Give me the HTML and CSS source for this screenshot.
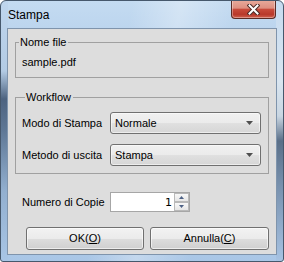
FILE: index.html
```html
<!DOCTYPE html>
<html lang="it">
<head>
<meta charset="utf-8">
<title>Stampa</title>
<link rel="stylesheet" href="styles.css">
</head>
<body>
<div class="window">
  <div class="titlebar">
    <span class="title">Stampa</span>
    <div class="close">
      <svg width="13" height="11" viewBox="0 0 13 11">
        <path d="M2.5 1.5 L10.5 9.5 M10.5 1.5 L2.5 9.5" stroke="#4a2a26" stroke-width="4" stroke-linecap="square" fill="none"/>
        <path d="M2.5 1.5 L10.5 9.5 M10.5 1.5 L2.5 9.5" stroke="#ffffff" stroke-width="2" stroke-linecap="square" fill="none"/>
      </svg>
    </div>
  </div>
  <div class="client">
    <fieldset class="group group-file">
      <legend>Nome file</legend>
      <div class="file-name">sample.pdf</div>
    </fieldset>
    <fieldset class="group group-workflow">
      <legend>Workflow</legend>
      <div class="row">
        <span class="label">Modo di Stampa</span>
        <div class="combo"><span>Normale</span><svg class="arrow" width="7" height="4" viewBox="0 0 7 4"><polygon points="0,0 7,0 3.5,4" fill="#4f4f4f"/></svg></div>
      </div>
      <div class="row">
        <span class="label">Metodo di uscita</span>
        <div class="combo"><span>Stampa</span><svg class="arrow" width="7" height="4" viewBox="0 0 7 4"><polygon points="0,0 7,0 3.5,4" fill="#4f4f4f"/></svg></div>
      </div>
    </fieldset>
    <div class="row copies">
      <span class="label">Numero di Copie</span>
      <div class="spin">
        <span class="value">1</span>
        <div class="spin-buttons">
          <div class="spin-btn"><svg width="5" height="3" viewBox="0 0 5 3"><polygon points="0,3 5,3 2.5,0" fill="#4d6185"/></svg></div>
          <div class="spin-btn"><svg width="5" height="3" viewBox="0 0 5 3"><polygon points="0,0 5,0 2.5,3" fill="#4d6185"/></svg></div>
        </div>
      </div>
    </div>
    <div class="buttons">
      <div class="btn btn-ok">OK(<u>O</u>)</div>
      <div class="btn btn-cancel">Annulla(<u>C</u>)</div>
    </div>
  </div>
</div>
</body>
</html>
```

FILE: styles.css
```css
html, body {
  margin: 0;
  padding: 0;
  background: #ffffff;
}

body {
  font-family: "Liberation Sans", Arial, sans-serif;
  font-size: 11px;
  color: #000000;
}

.window {
  width: 284px;
  height: 262px;
  box-sizing: border-box;
  border: 1px solid #46586c;
  border-radius: 6px 6px 3px 3px;
  padding: 0 6px 6px 6px;
  display: flex;
  flex-direction: column;
  overflow: hidden;
  background:
    linear-gradient(to bottom, #bfd6ee 0, #b3cbe4 70px, #4d6380 98px, #5f7896 130px, #92afcf 190px, #a9c6e6 262px) left top / 7px 100% no-repeat,
    linear-gradient(to bottom, #c6dbf0 0, #d9e5f0 80px, #c9d6e2 115px, #5a6f88 140px, #7891ae 185px, #a8c4e4 262px) right top / 7px 100% no-repeat,
    linear-gradient(100deg, rgba(255,255,255,0) 40%, rgba(255,255,255,0.3) 55%, rgba(255,255,255,0) 72%),
    linear-gradient(to bottom, #c4dbf1 0, #bcd5ee 28px, #b4cee9 200px, #a9c6e6 262px);
}

.titlebar {
  height: 27px;
  flex: none;
  display: flex;
  justify-content: space-between;
  align-items: flex-start;
}

.title {
  font-size: 12px;
  line-height: 15px;
  margin-top: 7px;
  margin-left: 1px;
  color: #000000;
}

.close {
  width: 45px;
  height: 19px;
  box-sizing: border-box;
  margin-top: -1px;
  margin-right: 1px;
  border: 1px solid #5a2b25;
  border-top: none;
  border-radius: 0 0 4px 4px;
  background: linear-gradient(to bottom, #e8ab9c 0%, #de8f80 45%, #c84b3b 52%, #b8392b 80%, #d0614f 100%);
  box-shadow: inset 0 0 0 1px rgba(255,255,255,0.35);
  display: flex;
  align-items: center;
  justify-content: center;
}

.client {
  flex: 1;
  background: #dddddd;
  border: 1px solid #7f94ac;
  padding: 0 7px;
  display: flex;
  flex-direction: column;
}

.group {
  margin: 0;
  padding: 0;
  min-width: 0;
  border: 1px solid #a0a0a0;
}

.group legend {
  font-size: 11px;
  line-height: 13px;
  margin-left: 3px;
  padding: 0 2px 0 1px;
}

.group-file {
  margin-top: 7px;
}

.file-name {
  line-height: 13px;
  padding: 7px 6px 8px 6px;
}

.group-workflow {
  margin-top: 13px;
  padding: 8px 7px 7px 6px;
  display: flex;
  flex-direction: column;
  gap: 10px;
}

.row {
  display: flex;
  align-items: center;
}

.label {
  width: 88px;
  flex: none;
  line-height: 13px;
}

.combo {
  flex: 1;
  height: 22px;
  box-sizing: border-box;
  border: 1px solid #707070;
  border-radius: 3px;
  background: linear-gradient(to bottom, #f0f0f0 0%, #ebebeb 50%, #e0e0e0 51%, #d6d6d6 100%);
  box-shadow: inset 0 0 0 1px rgba(255,255,255,0.55);
  display: flex;
  align-items: center;
  justify-content: space-between;
  padding: 0 7px 0 4px;
}

.copies {
  margin-top: 18px;
  padding-left: 7px;
}

.spin {
  width: 80px;
  height: 20px;
  box-sizing: border-box;
  border: 1px solid #a6a6a6;
  background: #ffffff;
  display: flex;
  align-items: center;
  justify-content: flex-end;
}

.value {
  font-family: "DejaVu Sans", sans-serif;
  font-size: 11px;
  margin-right: 2px;
}

.spin-buttons {
  width: 15px;
  height: 18px;
  display: flex;
  flex-direction: column;
}

.spin-btn {
  flex: 1;
  box-sizing: border-box;
  border: 1px solid #b9b9b9;
  background: linear-gradient(to bottom, #f8f8f8, #e6e6e6);
  display: flex;
  align-items: center;
  justify-content: center;
}

.buttons {
  margin-top: 15px;
  padding-left: 11px;
  display: flex;
  gap: 6px;
}

.btn {
  height: 23px;
  box-sizing: border-box;
  border: 1px solid #707070;
  border-radius: 3px;
  background: linear-gradient(to bottom, #f2f2f2 0%, #ebebeb 50%, #dddddd 51%, #cfcfcf 100%);
  box-shadow: inset 0 0 0 1px rgba(255,255,255,0.6);
  display: flex;
  align-items: center;
  justify-content: center;
  line-height: 13px;
}

.btn u {
  text-decoration: underline;
}

.btn-ok {
  width: 119px;
}

.btn-cancel {
  width: 120px;
}
```
